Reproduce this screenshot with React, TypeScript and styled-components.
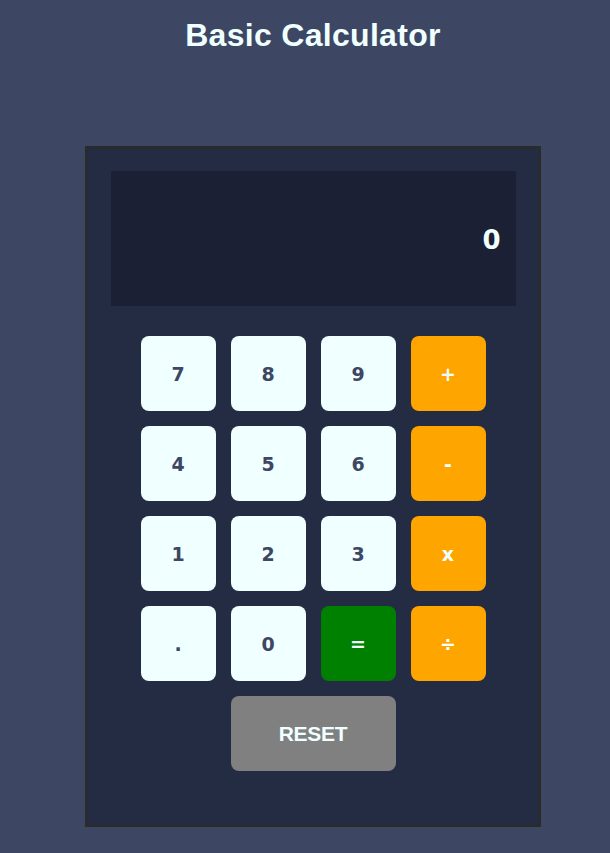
import React from "react";
import styled, { createGlobalStyle } from "styled-components";

const GlobalStyle = createGlobalStyle`
  html, body {
    margin: 0;
    padding: 0;
    background: #3d4763;
  }
  body {
    font-family: "Liberation Sans", Arial, sans-serif;
  }
`;

const Page = styled.div`
  box-sizing: border-box;
  width: 100%;
  min-height: 853px;
  padding-left: 16px;
  display: flex;
  flex-direction: column;
  align-items: center;
  background: #3d4763;
`;

const Title = styled.h1`
  margin: 17px 0 0;
  font-family: "Liberation Sans", Arial, sans-serif;
  font-weight: 700;
  font-size: 32px;
  line-height: 36px;
  color: #f0ffff;
  letter-spacing: 0.3px;
`;

const Calculator = styled.div`
  margin-top: 93px;
  width: 450px;
  border: 3px solid #2a2b2e;
  background: #242c44;
  padding: 22px 0 53px;
  display: flex;
  flex-direction: column;
  align-items: center;
`;

const Display = styled.div`
  box-sizing: border-box;
  width: 90%;
  height: 135px;
  background: #1b2034;
  display: flex;
  align-items: center;
  justify-content: flex-end;
  padding-right: 15px;
  padding-top: 2px;
  font-family: "DejaVu Sans", Verdana, sans-serif;
  font-weight: 700;
  font-size: 26px;
  color: #f0ffff;
`;

const Keypad = styled.div`
  margin-top: 30px;
  display: grid;
  grid-template-columns: repeat(4, 75px);
  grid-auto-rows: 75px;
  gap: 15px;
`;

type Variant = "digit" | "op" | "equals" | "reset";

const bg: Record<Variant, string> = {
  digit: "#f0ffff",
  op: "#ffa500",
  equals: "#008000",
  reset: "#808080",
};

const Key = styled.button<{ $variant: Variant }>`
  border: none;
  border-radius: 8px;
  padding: 0;
  margin: 0;
  background: ${(p) => bg[p.$variant]};
  color: ${(p) => (p.$variant === "digit" ? "#3d4763" : "#f0ffff")};
  font-family: "DejaVu Sans", Verdana, sans-serif;
  font-weight: 700;
  font-size: 19px;
  display: flex;
  align-items: center;
  justify-content: center;
  cursor: pointer;
`;

const ResetKey = styled(Key)`
  grid-column: 2 / span 2;
  font-family: "Liberation Sans", Arial, sans-serif;
  font-size: 21px;
  letter-spacing: -0.3px;
`;

const keys: { label: string; variant: Variant }[] = [
  { label: "7", variant: "digit" },
  { label: "8", variant: "digit" },
  { label: "9", variant: "digit" },
  { label: "+", variant: "op" },
  { label: "4", variant: "digit" },
  { label: "5", variant: "digit" },
  { label: "6", variant: "digit" },
  { label: "-", variant: "op" },
  { label: "1", variant: "digit" },
  { label: "2", variant: "digit" },
  { label: "3", variant: "digit" },
  { label: "x", variant: "op" },
  { label: ".", variant: "digit" },
  { label: "0", variant: "digit" },
  { label: "=", variant: "equals" },
  { label: "÷", variant: "op" },
];

export default function App() {
  return (
    <>
      <GlobalStyle />
      <Page>
        <Title>Basic Calculator</Title>
        <Calculator>
          <Display>0</Display>
          <Keypad>
            {keys.map((k) => (
              <Key key={k.label} $variant={k.variant}>
                {k.label}
              </Key>
            ))}
            <ResetKey $variant="reset">RESET</ResetKey>
          </Keypad>
        </Calculator>
      </Page>
    </>
  );
}
